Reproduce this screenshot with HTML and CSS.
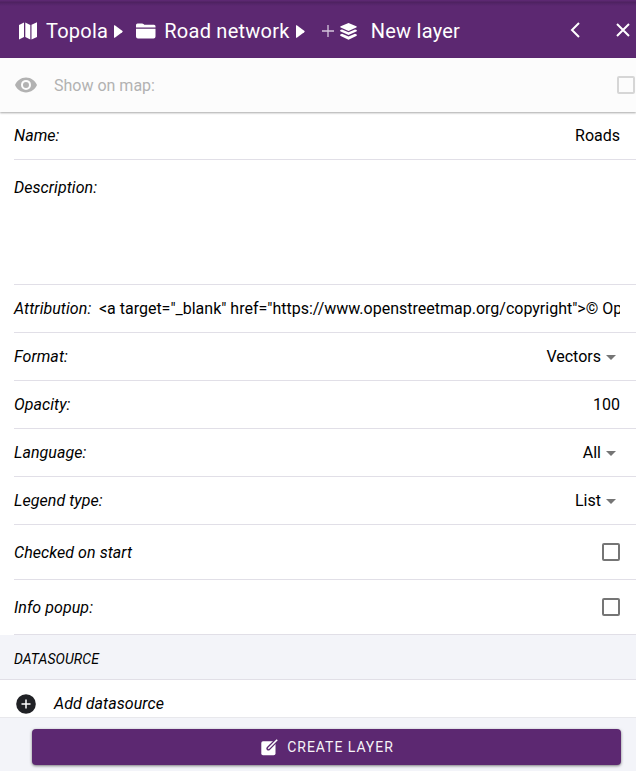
FILE: index.html
```html
<!DOCTYPE html>
<html lang="en">
<head>
<meta charset="utf-8">
<title>New layer</title>
<link rel="stylesheet" href="styles.css">
</head>
<body>
<div class="panel">
  <header class="navbar">
    <nav class="crumbs">
      <svg class="icon-map" width="18" height="18" viewBox="0 0 18 18"><path d="M0 3 5 0.5V15L0 17.5ZM6.3 0.5 11.3 3V17.5L6.3 15ZM12.5 2.8 18 0.3V15L12.5 17.5Z"/></svg>
      <span class="crumb">Topola</span>
      <svg class="arrow" width="9" height="13" viewBox="0 0 9 14" preserveAspectRatio="none"><path d="M0 .6Q0-.2.8.4L8.2 6.2Q9.2 7 8.2 7.8L.8 13.6Q0 14.2 0 13.4Z"/></svg>
      <svg class="icon-folder" width="20" height="16" viewBox="0 0 20 16"><path d="M0 4.5V2Q0 .5 1.5.5H6Q7 .5 7.8 1.3L8.3 1.7H18Q19.5 1.7 19.5 3.2V4.5ZM0 5.7H19.5V13.5Q19.5 15.5 17.5 15.5H2Q0 15.5 0 13.5Z"/></svg>
      <span class="crumb">Road network</span>
      <svg class="arrow" width="9" height="13" viewBox="0 0 9 14" preserveAspectRatio="none"><path d="M0 .6Q0-.2.8.4L8.2 6.2Q9.2 7 8.2 7.8L.8 13.6Q0 14.2 0 13.4Z"/></svg>
      <svg class="icon-plus" width="12" height="12" viewBox="0 0 12 12"><path d="M6 0V12M0 6H12"/></svg>
      <svg class="icon-layers" width="17" height="17" viewBox="0 0 17 17"><path d="M8.5 0 16.3 3.3Q17.2 3.9 16.3 4.5L8.5 7.9.7 4.5Q-.2 3.9.7 3.3ZM.3 7.1 2 6.4 8.5 9.2 15 6.4 16.7 7.1Q17.1 8 16.3 8.4L8.5 12 .7 8.4Q-.1 8 .3 7.1ZM.3 11.5 2 10.8 8.5 13.6 15 10.8 16.7 11.5Q17.1 12.6 16.3 13L8.5 16.7.7 13Q-.1 12.6.3 11.5Z"/></svg>
      <span class="crumb">New layer</span>
    </nav>
    <div class="actions">
      <svg width="10" height="16" viewBox="0 0 10 16"><path d="M9 1 2 8 9 15"/></svg>
      <svg width="14" height="14" viewBox="0 0 14 14"><path d="M1 1 13 13M13 1 1 13"/></svg>
    </div>
  </header>

  <div class="show-row">
    <svg width="22" height="16" viewBox="0 0 22 16"><path fill-rule="evenodd" d="M11 .4C6 .4 1.8 3.6 0 8 1.8 12.4 6 15.4 11 15.4S20.2 12.4 22 8C20.2 3.6 16 .4 11 .4ZM11 2.9A5 5 0 1 1 11 12.9 5 5 0 0 1 11 2.9ZM11 4.9A3 3 0 1 0 11 10.9 3 3 0 0 0 11 4.9Z"/></svg>
    <span>Show on map:</span>
    <i class="checkbox"></i>
  </div>

  <main class="form">
    <div class="row"><label>Name:</label><span class="value">Roads</span></div>
    <div class="row description"><label>Description:</label></div>
    <div class="row"><label>Attribution:</label><span class="value attribution">&lt;a target="_blank" href="https://www.openstreetmap.org/copyright"&gt;© OpenStreetMap contributors&lt;/a&gt;</span></div>
    <div class="row"><label>Format:</label><span class="value select">Vectors</span></div>
    <div class="row"><label>Opacity:</label><span class="value">100</span></div>
    <div class="row"><label>Language:</label><span class="value select">All</span></div>
    <div class="row"><label>Legend type:</label><span class="value select">List</span></div>
    <div class="row check"><label>Checked on start</label><i class="checkbox"></i></div>
    <div class="row check"><label>Info popup:</label><i class="checkbox"></i></div>
  </main>

  <h2 class="section-title">DATASOURCE</h2>
  <div class="add-row">
    <svg width="20" height="20" viewBox="0 0 20 20"><circle cx="10" cy="10" r="9.8"/><path d="M10 5.5V14.5M5.5 10H14.5"/></svg>
    <span>Add datasource</span>
  </div>

  <footer class="footer">
    <button class="create" type="button">
      <svg width="17" height="17" viewBox="0 0 17 17"><path class="sheet" d="M2 2.3H14.5V14.5Q14.5 16.3 12.7 16.3H2Q.3 16.3.3 14.5V4Q.3 2.3 2 2.3Z"/><path class="pen-edge" d="M7.4 9.5 15.2 1.7"/><path class="pen" d="M7.2 9.7 16.2.7"/></svg>
      <span>CREATE LAYER</span>
    </button>
  </footer>
</div>
</body>
</html>
```

FILE: styles.css
```css
* { box-sizing: border-box; }

body {
  margin: 0;
  font: 16px/24px Roboto, sans-serif;
  color: #000;
  background: #fff;
  overflow: hidden;
}

svg { display: block; flex: none; fill: currentColor; }

.panel { display: flex; flex-direction: column; height: 771px; }

.navbar {
  display: flex;
  justify-content: space-between;
  align-items: center;
  height: 58px;
  flex: none;
  padding: 4px 6px 0 19px;
  color: #fff;
  background: linear-gradient(#5c2871 0 1px, #4d215f 2px, #55256a 4px, #5c2871 6px);
}

.crumbs { display: flex; align-items: center; }
.crumb { font-size: 20px; letter-spacing: .25px; white-space: nowrap; }
.icon-map { margin-right: 9px; }
.arrow { margin-left: 6px; }
.icon-folder { margin: 0 8px 0 13px; }
.icon-plus { margin: 0 6px 0 17px; fill: none; stroke: #d5c5dc; stroke-width: 1.3; }
.icon-layers { margin-right: 14px; }

.actions { display: flex; align-items: center; gap: 36px; padding-bottom: 3px; }
.actions svg { fill: none; stroke: #fff; stroke-width: 2; }

.show-row {
  position: relative;
  display: flex;
  align-items: center;
  height: 54px;
  flex: none;
  padding: 0 1px 0 15px;
  color: #b2b2b2;
  background: #fcfcfc;
  box-shadow: 0 1px 2px rgba(0, 0, 0, .35);
}
.show-row span { margin-left: 17px; padding-top: 2px; }

.checkbox {
  width: 18px;
  height: 18px;
  margin-left: auto;
  flex: none;
  border: 2px solid #757575;
  border-radius: 2px;
}
.show-row .checkbox { border-color: #d6d6d6; }

.form { padding-left: 14px; flex: none; }
.row {
  display: flex;
  justify-content: space-between;
  align-items: center;
  height: 48px;
  padding-right: 16px;
  border-bottom: 1px solid #e1dfe7;
}
.row label, .add-row span { font-style: italic; letter-spacing: .06px; }
.description { height: 125px; align-items: flex-start; padding-top: 16px; }
.check { height: 55px; }
.check label { padding-top: 1px; }
.attribution { flex: 1; min-width: 0; margin-left: 7.6px; overflow: hidden; white-space: nowrap; }
.select { display: flex; align-items: center; gap: 5px; padding-right: 4px; }
.select::after {
  content: "";
  margin-top: 2px;
  border: 5px solid transparent;
  border-top-color: #757575;
  border-bottom: 0;
}

.section-title {
  height: 45px;
  flex: none;
  margin: 0;
  padding: 2px 14px 0;
  border-bottom: 1px solid #e1dfe7;
  background: #f3f4f9;
  font: italic 14px/44px Roboto, sans-serif;
  letter-spacing: .06px;
}

.add-row {
  display: flex;
  align-items: center;
  gap: 18px;
  height: 37px;
  flex: none;
  padding: 11px 16px 0;
}
.add-row circle { fill: #202125; }
.add-row path { stroke: #fff; stroke-width: 1.5; }

.footer {
  flex: 1;
  padding: 11px 15px 0 32px;
  border-top: 1px solid #e8e8ec;
  background: #f3f4f9;
}
.create {
  display: flex;
  align-items: center;
  justify-content: center;
  gap: 9px;
  width: 100%;
  height: 36px;
  padding: 0 0 0 2px;
  border: 0;
  border-radius: 4px;
  color: #fff;
  background: #5c2871;
  box-shadow: 0 1px 3px rgba(0, 0, 0, .5);
  font: 14px/36px Roboto, sans-serif;
  letter-spacing: .97px;
}
.create span { opacity: .95; }
.pen-edge { stroke: #5c2871; stroke-width: 4; stroke-linecap: round; }
.pen { stroke: #fff; stroke-width: 1.6; }
```
